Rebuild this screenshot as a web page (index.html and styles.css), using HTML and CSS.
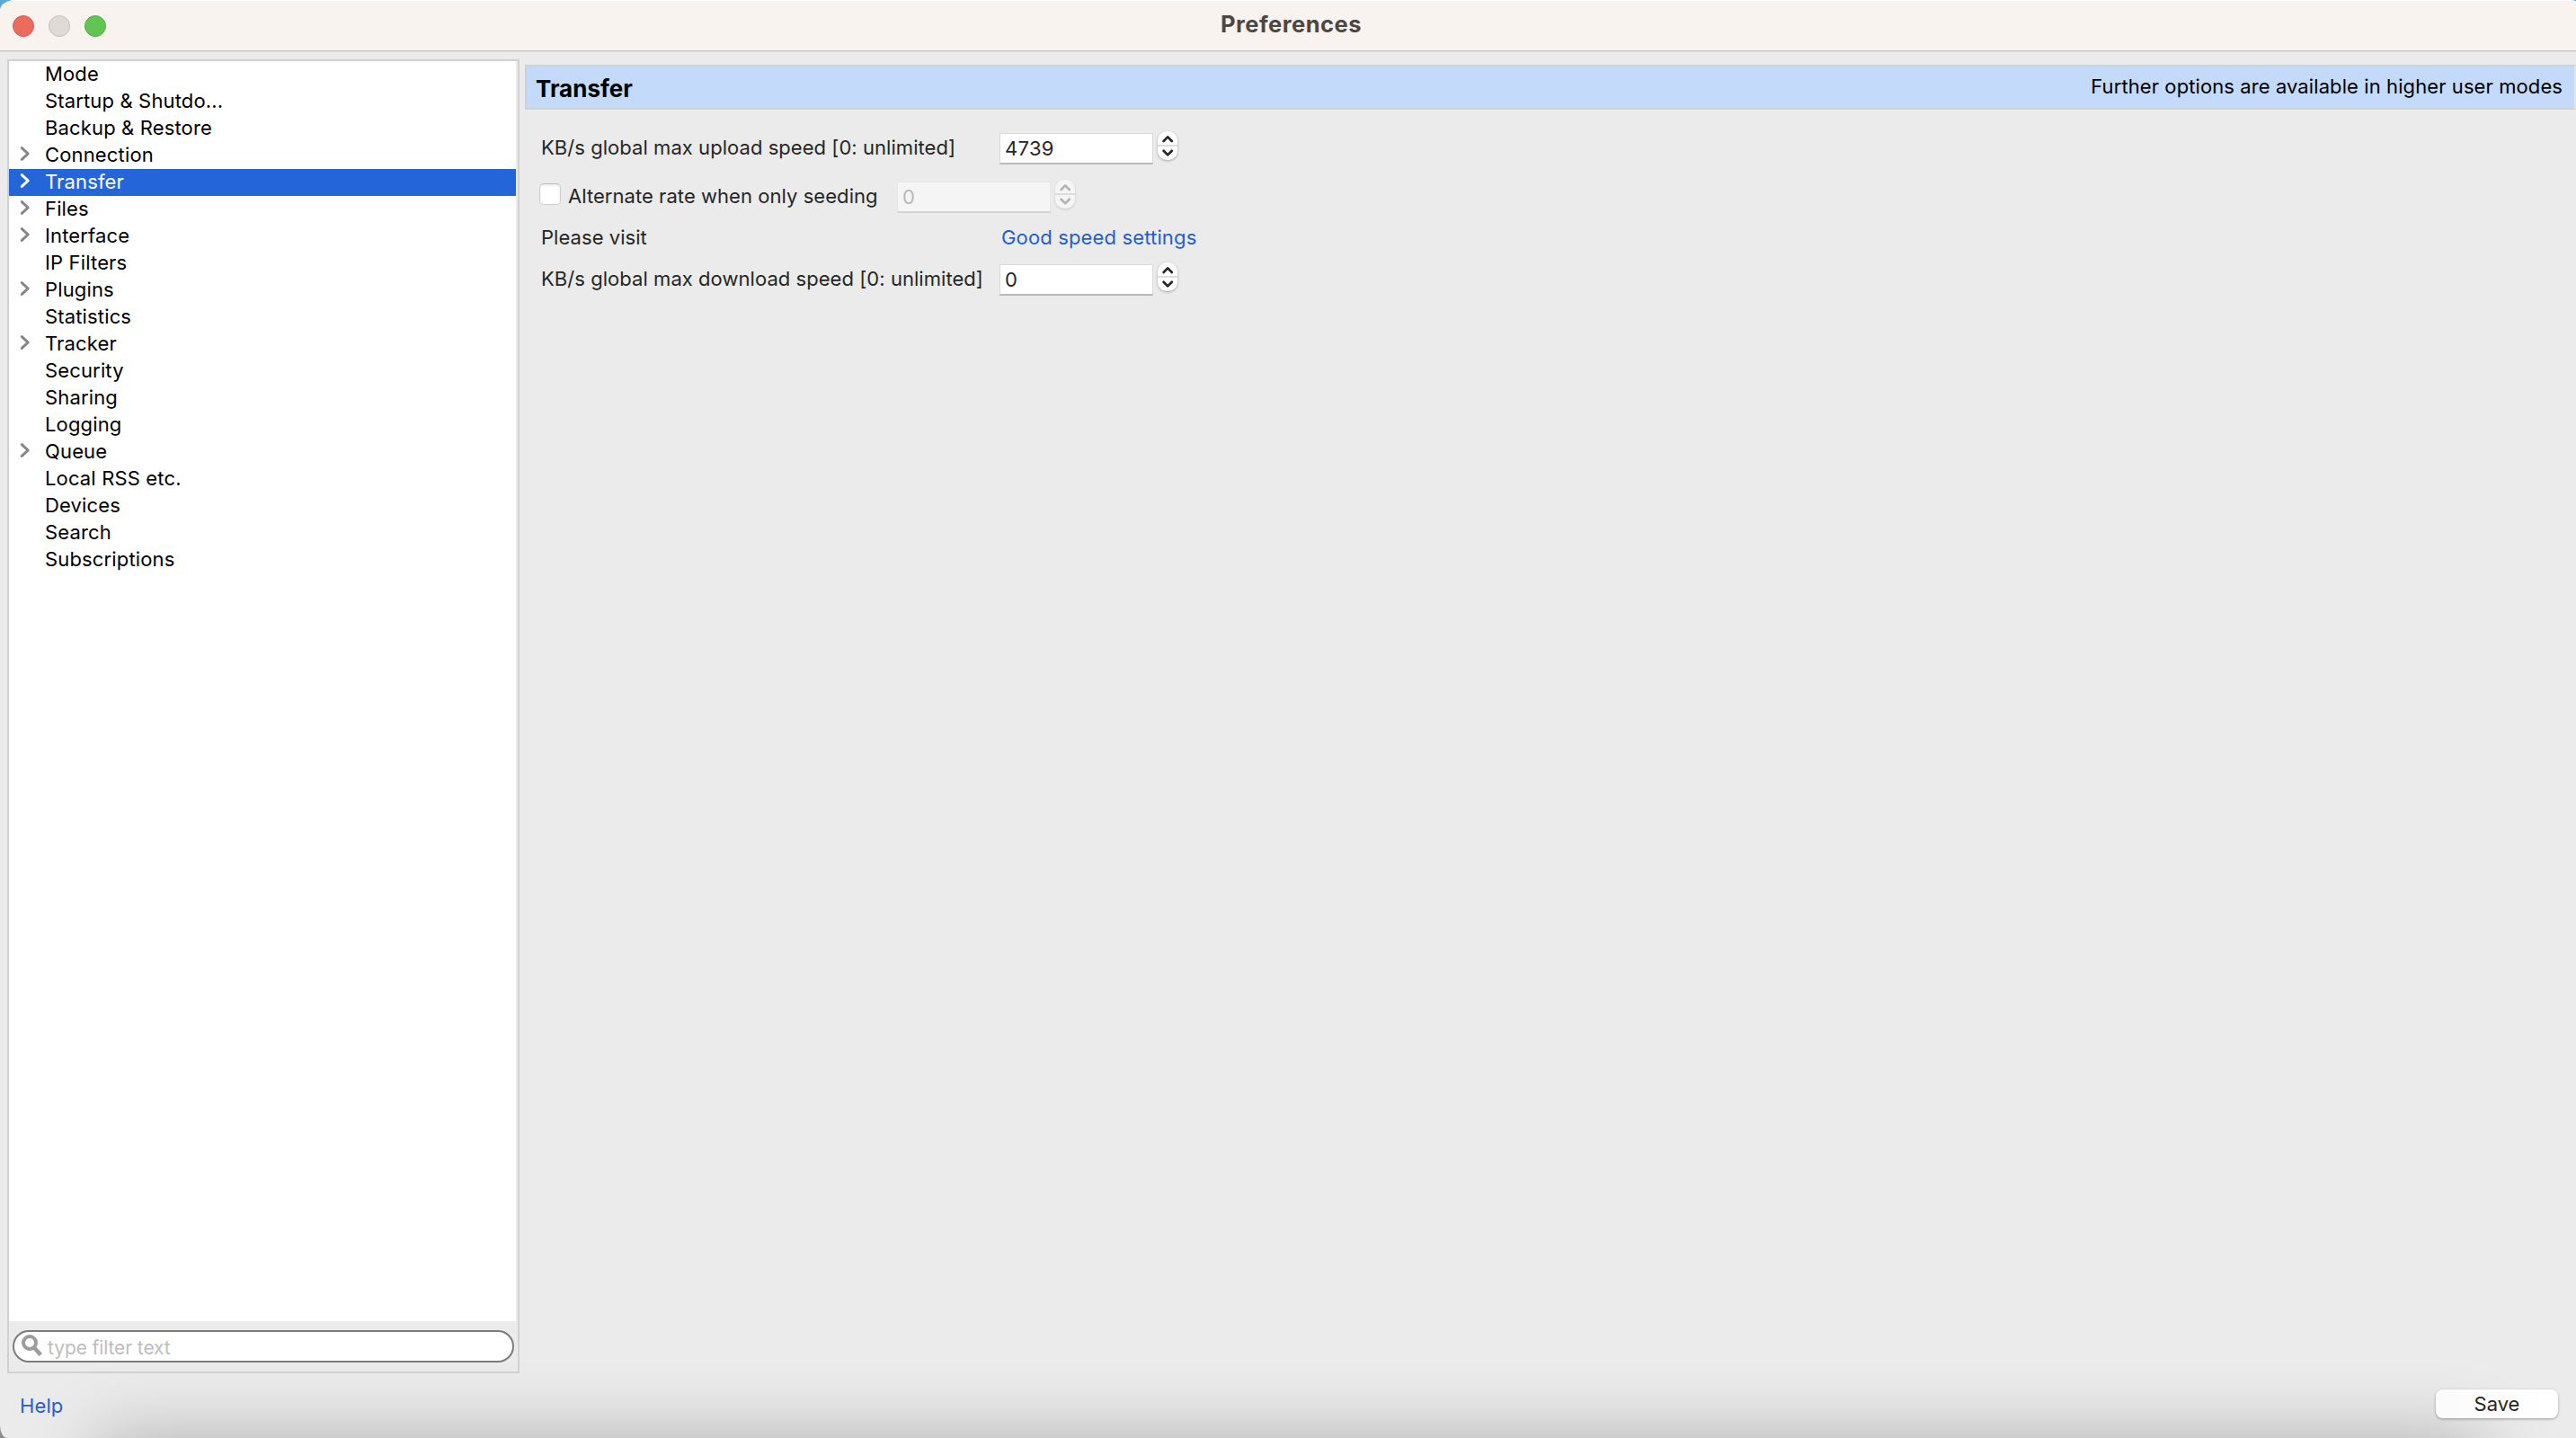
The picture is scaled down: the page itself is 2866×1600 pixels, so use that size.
FILE: index.html
```html
<!DOCTYPE html>
<html lang="en">
<head>
<meta charset="utf-8">
<title>Preferences</title>
<link rel="stylesheet" href="styles.css">
</head>
<body>
<svg class="defs" aria-hidden="true">
  <symbol id="chevron" viewBox="0 0 12 18"><path d="M2.3 2.6 9.2 9l-6.9 6.4" fill="none" stroke="currentColor" stroke-width="3" stroke-linecap="round" stroke-linejoin="round"/></symbol>
  <symbol id="arrows" viewBox="0 0 22 32"><path d="M6.6 11 11.2 6.4 15.8 11M6.6 21.8l4.6 4.6 4.6-4.6" fill="none" stroke="currentColor" stroke-width="2.7" stroke-linecap="round" stroke-linejoin="round"/><path d="M0 16h22" stroke="#dcdcdc" stroke-width="2"/></symbol>
</svg>
<div class="window">
  <header class="titlebar">
    <div class="lights"><span class="light close"></span><span class="light minimize"></span><span class="light zoom"></span></div>
    <h1 class="title">Preferences</h1>
  </header>
  <div class="content">
    <aside class="sidebar">
      <ul class="tree">
        <li class="row">Mode</li>
        <li class="row">Startup &amp; Shutdo...</li>
        <li class="row">Backup &amp; Restore</li>
        <li class="row"><svg class="chevron"><use href="#chevron"/></svg>Connection</li>
        <li class="row selected"><svg class="chevron"><use href="#chevron"/></svg>Transfer</li>
        <li class="row"><svg class="chevron"><use href="#chevron"/></svg>Files</li>
        <li class="row"><svg class="chevron"><use href="#chevron"/></svg>Interface</li>
        <li class="row">IP Filters</li>
        <li class="row"><svg class="chevron"><use href="#chevron"/></svg>Plugins</li>
        <li class="row">Statistics</li>
        <li class="row"><svg class="chevron"><use href="#chevron"/></svg>Tracker</li>
        <li class="row">Security</li>
        <li class="row">Sharing</li>
        <li class="row">Logging</li>
        <li class="row"><svg class="chevron"><use href="#chevron"/></svg>Queue</li>
        <li class="row">Local RSS etc.</li>
        <li class="row">Devices</li>
        <li class="row">Search</li>
        <li class="row">Subscriptions</li>
      </ul>
      <div class="filter">
        <svg class="magnifier" viewBox="0 0 24 28"><circle cx="9" cy="10" r="7" fill="none" stroke="#9c9c9c" stroke-width="4"/><path d="M14 15.5l7.3 8" stroke="#9c9c9c" stroke-width="4.6"/></svg>
        <span class="placeholder">type filter text</span>
      </div>
    </aside>
    <main class="panel">
      <div class="heading">
        <h2 class="name">Transfer</h2>
        <span class="hint">Further options are available in higher user modes</span>
      </div>
      <div class="form">
        <div class="field upload">
          <span class="label">KB/s global max upload speed [0: unlimited]</span>
          <span class="input">4739</span>
          <svg class="stepper"><use href="#arrows"/></svg>
        </div>
        <div class="field alternate">
          <span class="checkbox"></span>
          <span class="label">Alternate rate when only seeding</span>
          <span class="input disabled">0</span>
          <svg class="stepper disabled"><use href="#arrows"/></svg>
        </div>
        <div class="field visit">
          <span class="label">Please visit</span>
          <a class="link">Good speed settings</a>
        </div>
        <div class="field download">
          <span class="label">KB/s global max download speed [0: unlimited]</span>
          <span class="input">0</span>
          <svg class="stepper"><use href="#arrows"/></svg>
        </div>
      </div>
    </main>
  </div>
  <footer class="footer">
    <a class="link help">Help</a>
    <span class="save">Save</span>
  </footer>
</div>
</body>
</html>
```

FILE: styles.css
```css
* { box-sizing: border-box; }

body {
  margin: 0;
  background: linear-gradient(#5ba8d8 0 50%, #8c8c8c 50%);
  font: 22px/28px Inter, "Liberation Sans", sans-serif;
  color: #262626;
}

.defs { display: none; }

.window {
  position: relative;
  display: flex;
  flex-direction: column;
  width: 2866px;
  height: 1600px;
  overflow: hidden;
  border-radius: 17px 8px 0 8px / 12px 2px 0 14px;
  background: #ebebeb;
}

/* Title bar */
.titlebar {
  display: grid;
  grid-template-columns: 1fr auto 1fr;
  align-items: center;
  flex: none;
  height: 58px;
  padding: 0 14px 2px;
  border-top: 1px solid #fff;
  background: linear-gradient(#f8f3ee 0 55px, #c4c3c2 55px 56px, #dedede 56px);
}
.lights { display: flex; gap: 16px; }
.light { width: 24px; height: 24px; border-radius: 50%; border: 1px solid; }
.close { background: #ed6a5e; border-color: #d9594e; }
.minimize { background: #dedad6; border-color: #c4c0bd; }
.zoom { background: #61c554; border-color: #4fae42; }
.title {
  margin: 0 0 3px 7px;
  font-size: 25.5px;
  line-height: 32px;
  font-weight: 700;
  letter-spacing: .5px;
  color: #4b4743;
}

/* Columns */
.content {
  display: flex;
  gap: 6px;
  height: 1470px;
  flex: none;
  padding: 8px 0 0 8px;
}
.sidebar {
  display: flex;
  flex-direction: column;
  width: 570px;
  height: 1462px;
  flex: none;
  border: 2px solid #d1d1d1;
}
.tree {
  flex: 1;
  margin: 0 2px 0 0;
  padding: 0;
  list-style: none;
  background: #fff;
  color: #000;
  letter-spacing: .15px;
}
.row { position: relative; height: 30px; padding-left: 40px; }
.row.selected { background: #2466da; color: #fff; }
.chevron {
  position: absolute;
  left: 12px;
  top: 4px;
  width: 12px;
  height: 18px;
  color: #868686;
}
.selected .chevron { color: #fff; }

.filter {
  display: flex;
  align-items: center;
  height: 36px;
  margin: 10px 4px;
  padding-left: 8px;
  border: 2px solid #7c7c7c;
  border-radius: 18px;
  background: #fff;
}
.magnifier { width: 24px; height: 28px; margin: 0 5px 0 0; }
.placeholder { font-size: 21px; letter-spacing: -.1px; color: #bdbdbd; padding-top: 3px; }

/* Right pane */
.panel { flex: 1; padding-top: 6px; }
.heading {
  display: flex;
  justify-content: space-between;
  height: 50px;
  padding: 0 13px 0 10px;
  border: 2px solid #d1d1d1;
  border-right-color: #e4e4e4;
  background: #c4dafa;
  color: #000;
}
.name { margin: 0; font-size: 26px; line-height: 49px; font-weight: 700; }
.hint { line-height: 44px; letter-spacing: .09px; }

.form { padding: 24px 0 0 16px; }
.field { display: flex; align-items: flex-start; }
.upload { height: 54px; }
.alternate { height: 48px; }
.visit { height: 44px; }
.label { letter-spacing: .05px; }
.input {
  height: 35px;
  width: 171px;
  padding: 2px 0 0 5px;
  border: 1px solid #dadada;
  border-bottom: 2px solid #b9b9b9;
  background: #fff;
  letter-spacing: .3px;
}
.stepper {
  width: 22px;
  height: 32px;
  margin-left: 5px;
  border-radius: 10px;
  background: #fff;
  box-shadow: 0 1px 3px rgba(0, 0, 0, .3);
  color: #262626;
}
.upload .label, .download .label { width: 512px; padding: 4px 0 0 2px; }
.upload .input, .download .input { margin-top: 2px; }

.checkbox {
  width: 24px;
  height: 24px;
  margin: 4px 8px 0 0;
  border: 1px solid #cfcfcf;
  border-top-color: #bdbdbd;
  border-radius: 5px;
  background: #fff;
  box-shadow: inset 0 1px 3px rgba(0, 0, 0, .1);
}
.alternate .label { width: 366px; padding-top: 4px; }
.input.disabled {
  margin-top: 2px;
  background: #f5f5f5;
  border-color: #e6e6e6;
  border-bottom-color: #d3d3d3;
  color: #b9b9b9;
}
.stepper.disabled {
  background: #f5f5f5;
  color: #b4b4b4;
  box-shadow: 0 1px 3px rgba(0, 0, 0, .15);
}
.visit .label { width: 514px; padding: 2px 0 0 2px; }
.visit .link { padding-top: 2px; letter-spacing: .15px; }
.link { color: #1f5fd0; }

/* Footer with the shade that rises from the lower edge */
.footer {
  position: relative;
  display: flex;
  justify-content: space-between;
  align-items: flex-start;
  flex: 1;
  padding: 18px 20px 0 22px;
}
.footer::before {
  content: "";
  position: absolute;
  left: 108px;
  right: 105px;
  top: 72px;
  height: 200px;
  box-shadow: 0 0 80px rgba(0, 0, 0, .25);
}
.help { position: relative; padding-top: 4px; letter-spacing: .1px; }
.save {
  position: relative;
  width: 136px;
  height: 32px;
  border-radius: 8px;
  background: linear-gradient(to right, #fbfbfb, #fff);
  box-shadow: 0 1px 3px rgba(0, 0, 0, .35);
  line-height: 32px;
  text-align: center;
}
```
